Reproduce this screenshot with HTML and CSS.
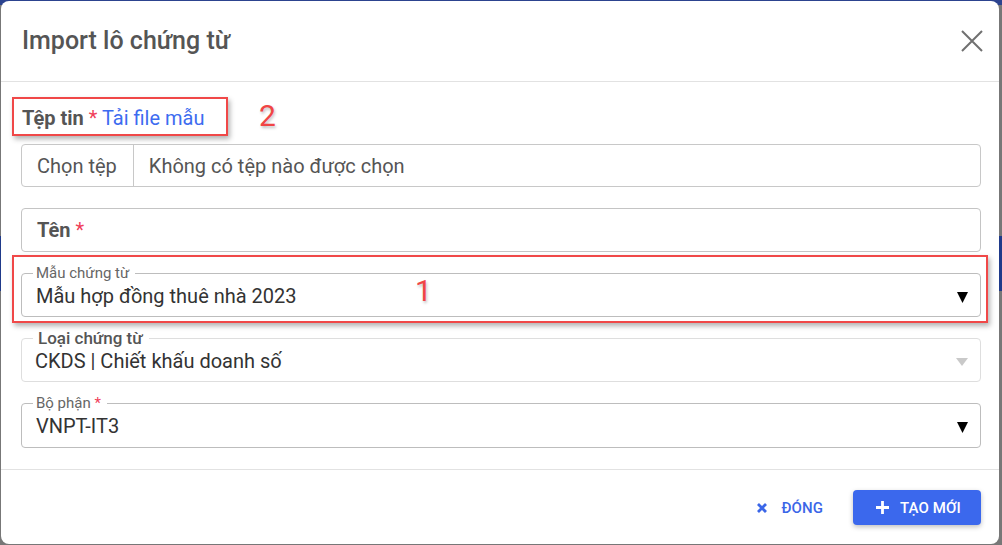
FILE: index.html
```html
<!DOCTYPE html>
<html lang="vi">
<head>
<meta charset="utf-8">
<title>Import lô chứng từ</title>
<link rel="stylesheet" href="styles.css">
</head>
<body>
<div class="dialog">
  <header class="dlg-header">
    <h1 class="dlg-title">Import lô chứng từ</h1>
    <button class="close-btn" aria-label="Đóng">
      <svg width="22" height="22" viewBox="0 0 22 22"><path d="M1 1L21 21M21 1L1 21" stroke="#707070" stroke-width="2" fill="none"/></svg>
    </button>
  </header>

  <div class="dlg-body">
    <div class="file-label"><b class="lbl">Tệp tin</b> <span class="req">*</span> <a class="link">Tải file mẫu</a></div>
    <div class="file-input">
      <span class="file-btn">Chọn tệp</span>
      <span class="file-name">Không có tệp nào được chọn</span>
    </div>

    <div class="text-input"><b class="lbl">Tên</b>&nbsp;<span class="req">*</span></div>

    <fieldset class="select">
      <legend>Mẫu chứng từ</legend>
      <div class="select-row">
        <span class="value">Mẫu hợp đồng thuê nhà 2023</span>
        <svg class="arrow" width="11" height="11" viewBox="0 0 11 11"><path d="M0 0H11L5.5 11Z" fill="#000"/></svg>
      </div>
    </fieldset>

    <fieldset class="select disabled">
      <legend>Loại chứng từ</legend>
      <div class="select-row">
        <span class="value">CKDS | Chiết khấu doanh số</span>
        <svg class="arrow arrow-dis" width="12" height="8" viewBox="0 0 12 8"><path d="M0 0H12L6 8Z" fill="#c9c9c9"/></svg>
      </div>
    </fieldset>

    <fieldset class="select last">
      <legend>Bộ phận <span class="req">*</span></legend>
      <div class="select-row">
        <span class="value">VNPT-IT3</span>
        <svg class="arrow" width="11" height="11" viewBox="0 0 11 11"><path d="M0 0H11L5.5 11Z" fill="#000"/></svg>
      </div>
    </fieldset>
  </div>

  <footer class="dlg-footer">
    <button class="btn-text">
      <svg width="10" height="10" viewBox="0 0 10 10"><path d="M1 1L9 9M9 1L1 9" stroke="#3b66e8" stroke-width="2.8" fill="none"/></svg>
      <span>ĐÓNG</span>
    </button>
    <button class="btn-primary">
      <svg width="13" height="13" viewBox="0 0 13 13"><path d="M6.5 0V13M0 6.5H13" stroke="#fff" stroke-width="2.8" fill="none"/></svg>
      <span>TẠO MỚI</span>
    </button>
  </footer>

  <div class="note-box note-2"></div>
  <div class="note-num num-2">2</div>
  <div class="note-box note-1"></div>
  <div class="note-num num-1">1</div>
</div>
</body>
</html>
```

FILE: styles.css
```css
html, body {
  margin: 0;
  padding: 0;
}
body {
  width: 1002px;
  height: 545px;
  overflow: hidden;
  background: linear-gradient(to bottom, #2c438f 0, #2c438f 5px, #777 5px, #777 236px, #1f3a8a 236px, #1f3a8a 291px, #777 291px);
  font-family: Roboto, "Noto Sans", Arial, sans-serif;
}
.dialog {
  position: relative;
  margin: 1px 0 0 1px;
  width: 998px;
  height: 543px;
  background: #fff;
  border-radius: 8px;
  display: flex;
  flex-direction: column;
  box-sizing: border-box;
}
.dlg-header {
  height: 81px;
  box-sizing: border-box;
  border-bottom: 1px solid #e2e2e2;
  display: flex;
  align-items: center;
  justify-content: space-between;
  padding: 0 16px 0 21px;
}
.dlg-title {
  margin: 0;
  font-size: 25px;
  font-weight: 500;
  color: #555;
  line-height: 30px;
}
.close-btn {
  border: 0;
  background: none;
  padding: 0;
  width: 22px;
  height: 22px;
  display: flex;
}
.dlg-body {
  padding: 24px 18px 21px 20px;
  display: flex;
  flex-direction: column;
}
.file-label {
  font-size: 20px;
  line-height: 24px;
  height: 24px;
  padding-left: 1px;
  margin-bottom: 14px;
  white-space: nowrap;
}
.lbl {
  color: #555;
  font-weight: 700;
}
.req {
  color: #f0405a;
}
.link {
  color: #3d6cf0;
}
.file-input {
  height: 43px;
  box-sizing: border-box;
  border: 1px solid #c8c8c8;
  border-radius: 4px;
  display: flex;
  align-items: stretch;
  font-size: 20px;
  color: #555;
}
.file-btn {
  display: flex;
  align-items: center;
  padding: 0 16px 0 15px;
  border-right: 1px solid #c8c8c8;
}
.file-name {
  display: flex;
  align-items: center;
  padding-left: 15px;
}
.text-input {
  margin-top: 21px;
  height: 44px;
  box-sizing: border-box;
  border: 1px solid #c4c4c4;
  border-radius: 4px;
  display: flex;
  align-items: center;
  padding: 0 15px;
  font-size: 20px;
}
.select {
  margin: 13px 0 0 0;
  padding: 3px 12px 8px 11px;
  border: 1px solid #bdbdbd;
  border-radius: 4px;
  min-width: 0;
  height: 52px;
  box-sizing: border-box;
}
.select.last {
  height: 53px;
  padding-bottom: 9px;
}
.select legend {
  padding: 0 6px 0 3px;
  font-size: 15px;
  line-height: 16px;
  color: #666;
}
.select.disabled {
  border-color: #dedede;
}
.select.disabled legend {
  font-size: 17px;
  font-weight: 500;
  color: #555;
  padding: 0 6px 0 5px;
}
.select-row {
  display: flex;
  align-items: center;
  justify-content: space-between;
  height: 24px;
  padding-left: 3px;
}
.select.disabled .select-row {
  padding-left: 2px;
}
.value {
  font-size: 20px;
  line-height: 24px;
  color: #333;
  white-space: nowrap;
}
.arrow {
  margin-top: 3px;
}
.arrow-dis {
  margin-top: 2px;
}
.dlg-footer {
  border-top: 1px solid #e2e2e2;
  display: flex;
  justify-content: flex-end;
  align-items: flex-start;
  padding: 20px 18px 0 0;
  gap: 15px;
}
.btn-text, .btn-primary {
  height: 35px;
  border: 0;
  font-family: Roboto, "Noto Sans", Arial, sans-serif;
  font-size: 15px;
  font-weight: 500;
  display: flex;
  align-items: center;
  border-radius: 4px;
  letter-spacing: 0.1px;
}
.btn-text {
  background: none;
  color: #3b66e8;
  padding: 0 15px;
  gap: 14px;
}
.btn-primary {
  width: 128px;
  background: #3b68ed;
  color: #fff;
  padding: 0 0 0 23px;
  gap: 11px;
  box-shadow: 0 2px 5px rgba(0, 0, 0, 0.25);
}
.note-box {
  position: absolute;
  border: 2px solid #f04848;
  box-sizing: border-box;
  box-shadow: 2px 3px 5px rgba(0, 0, 0, 0.3);
}
.note-2 {
  left: 11px;
  top: 96px;
  width: 216px;
  height: 39px;
}
.note-1 {
  left: 11px;
  top: 254px;
  width: 976px;
  height: 68px;
}
.note-num {
  position: absolute;
  font-size: 30px;
  line-height: 30px;
  color: #f04545;
  text-shadow: 1px 2px 3px rgba(0, 0, 0, 0.25);
}
.num-2 {
  left: 258px;
  top: 100px;
}
.num-1 {
  left: 414px;
  top: 275px;
}
```
